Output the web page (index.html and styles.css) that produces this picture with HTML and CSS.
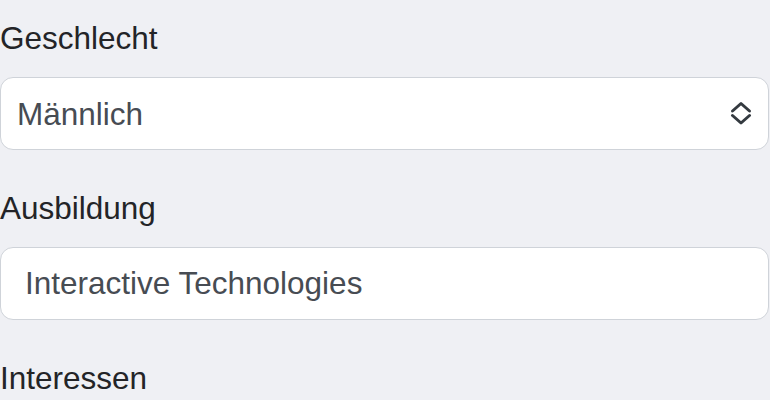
FILE: index.html
```html
<!DOCTYPE html>
<html lang="de">
<head>
<meta charset="utf-8">
<link rel="stylesheet" href="styles.css">
</head>
<body>
<form class="form">
  <div class="group">
    <label class="label" for="gender">Geschlecht</label>
    <div class="select-wrap">
      <select id="gender" class="control select">
        <option>Männlich</option>
        <option>Weiblich</option>
        <option>Divers</option>
      </select>
      <svg class="chevrons" viewBox="0 0 24 24" width="24" height="24" aria-hidden="true">
        <path d="M3.5 10 L12 2.5 L20.5 10" fill="none" stroke="#343a40" stroke-width="3" stroke-linecap="round" stroke-linejoin="round"/>
        <path d="M3.5 14.5 L12 22 L20.5 14.5" fill="none" stroke="#343a40" stroke-width="3" stroke-linecap="round" stroke-linejoin="round"/>
      </svg>
    </div>
  </div>
  <div class="group">
    <label class="label" for="edu">Ausbildung</label>
    <input id="edu" class="control input" type="text" value="Interactive Technologies">
  </div>
  <div class="group last">
    <label class="label">Interessen</label>
  </div>
</form>
</body>
</html>
```
FILE: styles.css
```css
html, body {
  margin: 0;
  padding: 0;
  background: #eff0f4;
}
body {
  font-family: "Liberation Sans", Arial, sans-serif;
  overflow: hidden;
}
.form {
  padding-top: 20px;
  margin-right: 1px;
}
.group {
  margin-bottom: 40px;
}
.group.last {
  margin-bottom: 0;
}
.label {
  display: block;
  font-size: 31.5px;
  line-height: 37px;
  color: #232427;
  margin-bottom: 20px;
}
.group.last .label {
  margin-bottom: 0;
}
.control {
  display: block;
  box-sizing: border-box;
  width: 100%;
  height: 73px;
  margin: 0;
  font-family: "Liberation Sans", Arial, sans-serif;
  font-size: 31.5px;
  color: #474c53;
  background: #ffffff;
  border: 1.5px solid #cfd3d9;
  border-radius: 13px;
  outline: none;
}
.select-wrap {
  position: relative;
}
.select {
  -webkit-appearance: none;
  appearance: none;
  padding: 0 60px 0 16px;
}
.input {
  padding: 0 24px;
}
.chevrons {
  position: absolute;
  right: 16px;
  top: 24px;
  pointer-events: none;
}
```
